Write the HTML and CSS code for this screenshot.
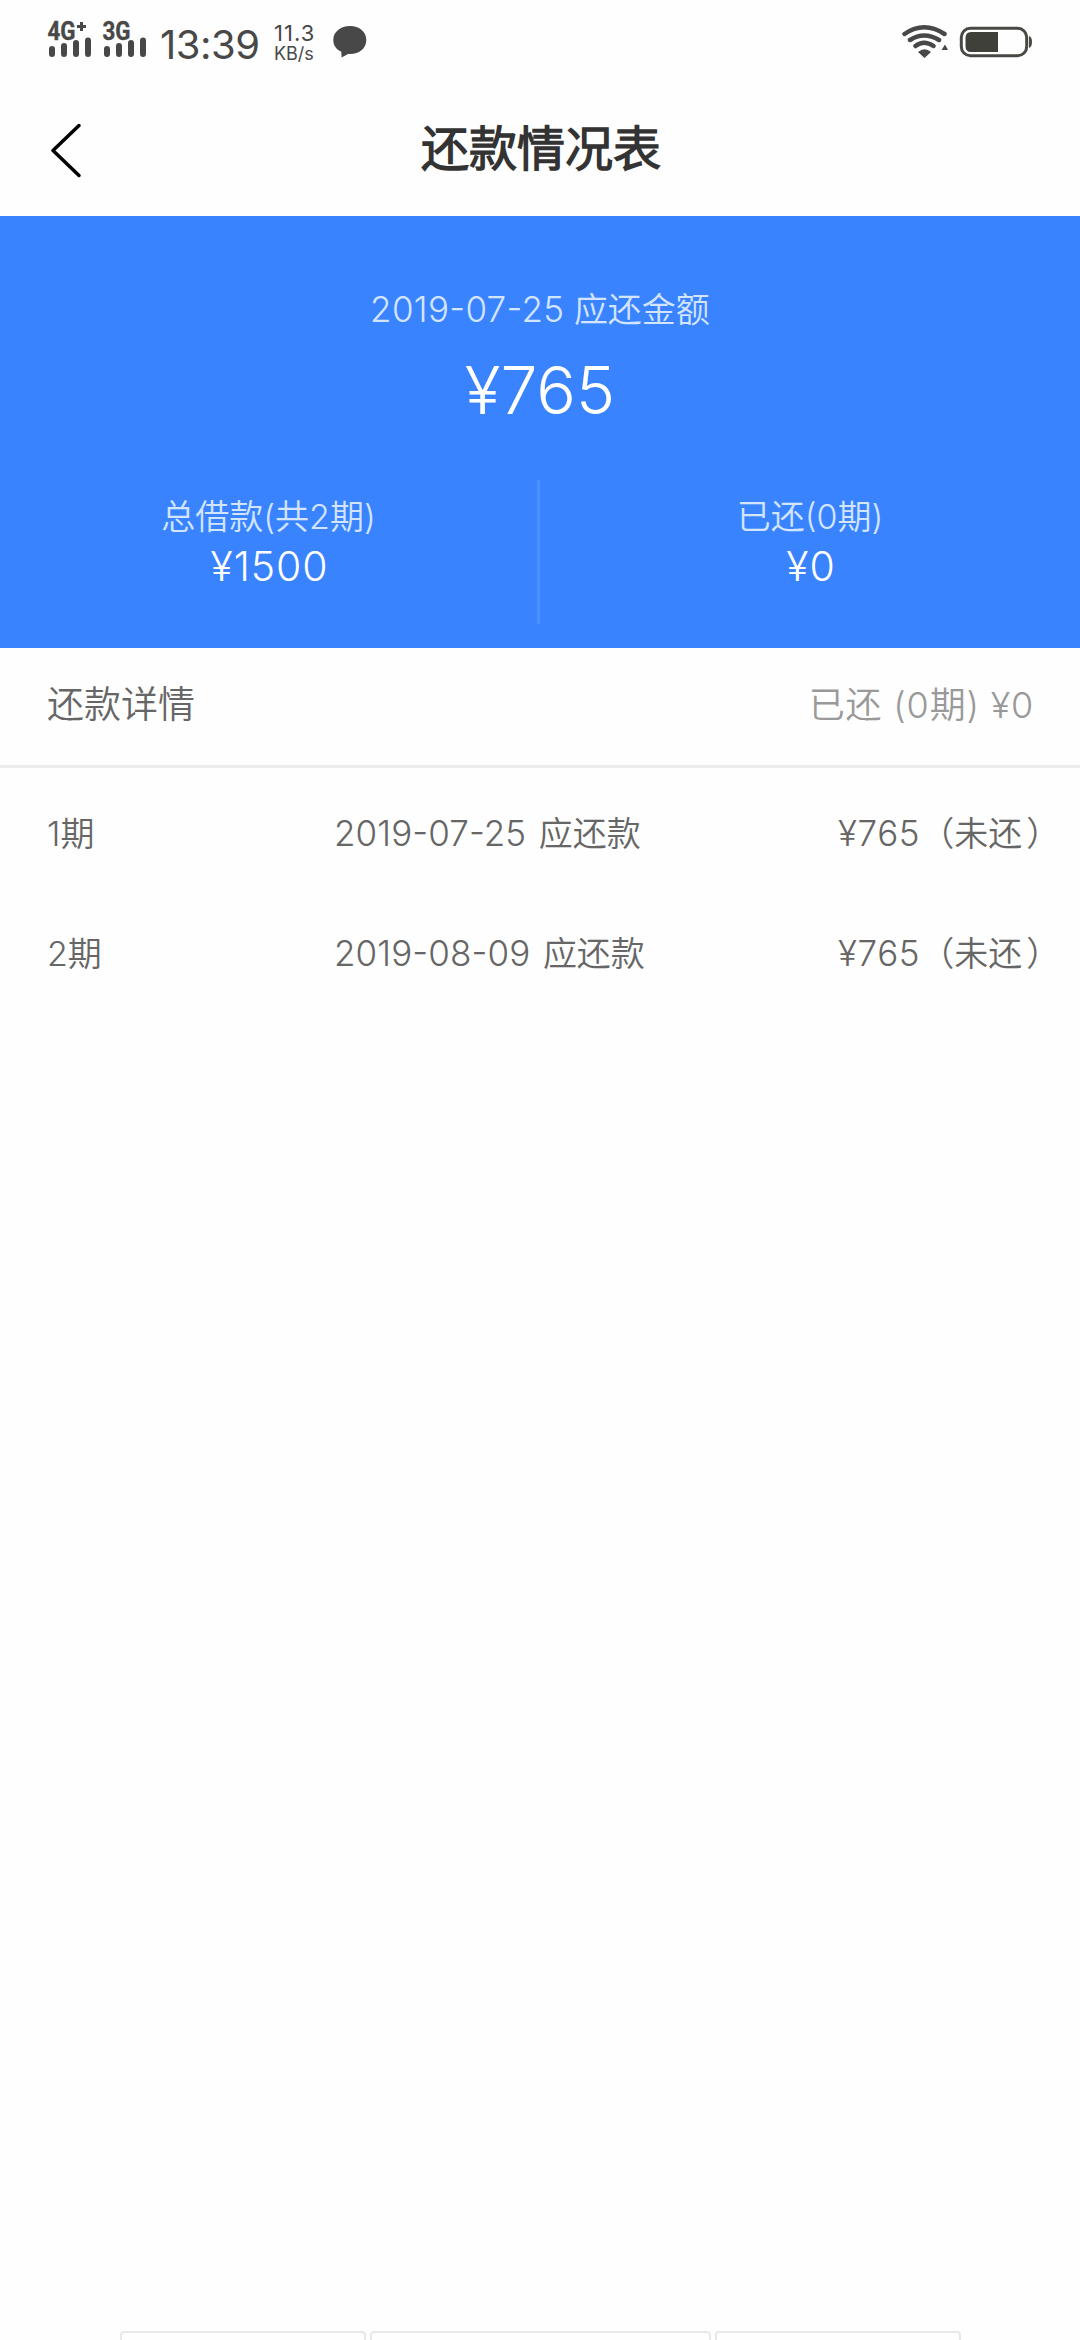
FILE: index.html
```html
<!DOCTYPE html>
<html lang="zh-CN">
<head>
<meta charset="utf-8">
<title>还款情况表</title>
<link rel="stylesheet" href="styles.css">
</head>
<body>
<div class="screen">
  <div class="status">
    <svg class="signals" width="106" height="40" viewBox="44 20 106 40">
      <g class="net"><text x="47.500" y="40" textLength="28" lengthAdjust="spacingAndGlyphs">4G</text><text x="102.500" y="40" textLength="28" lengthAdjust="spacingAndGlyphs">3G</text></g>
      <path d="M77 26.500h9M81.500 22v9" stroke="#484848" stroke-width="3"/>
      <path d="M52 49v5M64 46v8M76 43v11M88 40.500v13.500M107 49v5M119 46v8M131 43v11M143 40.500v13.500" stroke="#484848" stroke-width="6" stroke-linecap="round"/>
    </svg>
    <span class="time">13:39</span>
    <div class="speed"><span class="rate">11.3</span><span class="unit">KB/s</span></div>
    <svg class="bubble" width="34" height="34" viewBox="0 0 34 34"><path fill="#484848" d="M17 1C7.500 1 .3 6.800.3 15c0 5.400 3 9.500 8 11.800L8.600 32.500 15 29C26 29.800 33.300 23.500 33.300 15 33.300 6.800 26.500 1 17 1z"/></svg>
    <svg class="wifi" width="48" height="36" viewBox="900 24 48 36">
      <g fill="none" stroke="#484848" stroke-width="4.500" stroke-linecap="round"><path d="M904.500 34Q924 20.500 944.500 34M910 40Q924 31 939 40M915.500 46Q924 39.500 933.500 46"/></g>
      <path fill="#484848" d="M918 52Q924.500 46.500 931 52L924.500 58zM941.500 50L945 44.500 948 50z"/>
    </svg>
    <svg class="battery" width="74" height="32" viewBox="959 26 74 32">
      <rect x="961.300" y="28.300" width="65.400" height="27.400" rx="9" fill="none" stroke="#484844" stroke-width="3"/>
      <path fill="#40403b" d="M998 32v20H971q-5.500 0-5.500-6v-8q0-6 5.500-6z"/>
      <path fill="#484844" d="M1029 36q3 1 3 6t-3 6z"/>
    </svg>
  </div>
  <header class="nav">
    <svg class="back" width="36" height="60" viewBox="48 121 36 60"><path d="M79 125.500L53 150.500 79 175.500" fill="none" stroke="#000" stroke-width="3.500" stroke-linecap="round" stroke-linejoin="round"/></svg>
    <h1 class="title">还款情况表</h1>
  </header>
  <section class="summary">
    <div class="due-label"><span class="num">2019-07-25</span> 应还金额</div>
    <div class="due-amount">¥765</div>
    <div class="totals">
      <div class="total"><div class="total-label">总借款(共2期)</div><div class="total-value">¥1500</div></div>
      <div class="total"><div class="total-label">已还(0期)</div><div class="total-value">¥0</div></div>
    </div>
  </section>
  <div class="detail-head"><span class="detail-title">还款详情</span><span class="detail-paid">已还 (0期) ¥0</span></div>
  <div class="list">
    <div class="row"><span class="term">1期</span><span class="date"><span class="num">2019-07-25</span> 应还款</span><span class="amount"><span class="num">¥765</span><span class="state">（未还<span class="close">）</span></span></span></div>
    <div class="row"><span class="term">2期</span><span class="date"><span class="num">2019-08-09</span> 应还款</span><span class="amount"><span class="num">¥765</span><span class="state">（未还<span class="close">）</span></span></span></div>
  </div>
  <footer class="tabs"><div class="tab"></div><div class="tab wide"></div><div class="tab"></div></footer>
</div>
</body>
</html>
```
FILE: styles.css
```css
* { box-sizing: border-box; }
body { margin: 0; background: #fefefe; }
.screen {
  width: 1080px; height: 2340px; overflow: hidden;
  display: flex; flex-direction: column;
  background: #fefefe; color: #666;
  font-family: Inter, "Noto Sans CJK SC DemiLight", "Noto Sans CJK SC", sans-serif;
  font-weight: 350; font-size: 34px; line-height: 48px; white-space: nowrap;
}
.num { font-size: 35px; line-height: 40px; font-feature-settings: "case"; }
.status { display: flex; align-items: flex-start; height: 84px; padding: 20px 47px 0 44px; color: #484848; }
.signals { flex: none; overflow: visible; }
.net text { font: 700 25.5px Roboto, sans-serif; fill: #484848; stroke: #484848; stroke-width: 0.4px; }
.time { width: 114px; margin: 0 0 0 10px; font-size: 40px; font-weight: 400; line-height: 50px; letter-spacing: -0.5px; }
.speed { display: flex; flex-direction: column; width: 50px; font-weight: 400; }
.rate { font-size: 22px; line-height: 27px; letter-spacing: 1px; }
.unit { font-size: 18px; line-height: 14px; }
.bubble { margin: 5px 0 0 9px; }
.wifi { margin: 4px 11px 0 auto; }
.battery { margin-top: 6px; }
.nav { display: flex; align-items: center; height: 132px; padding: 0 48px 0 48px; background: #fefefe; }
.back { flex: none; margin-top: 2px; }
.title { flex: 1; margin: 0 34px 2px 0; text-align: center; color: #333; font-size: 48px; line-height: 64px; font-weight: 700; }
.summary { height: 432px; background: #3983ff; color: #fff; text-align: center; padding-top: 70px; }
.due-label, .total-label { color: #d3e4ff; }
.due-label { height: 48px; }
.due-label .num { letter-spacing: 0.3px; }
.due-amount { font-size: 66px; line-height: 80px; margin-top: 16px; }
.totals { display: flex; height: 144px; margin-top: 50px; }
.total { width: 540px; padding-top: 13px; }
.total:first-child { border-right: 3px solid #4c8fff; }
.total-value { font-size: 41px; line-height: 50px; letter-spacing: 0.9px; padding-left: 2px; }
.detail-head { display: flex; justify-content: space-between; height: 120px; padding: 33px 46px 0 47px; border-bottom: 3px solid #ececec; font-size: 37px; }
.detail-paid { color: #999; font-size: 36px; letter-spacing: 0.8px; }
.list { padding-top: 6px; }
.row { display: grid; grid-template-columns: 287px 504px 1fr; align-items: center; height: 120px; padding-left: 47px; }
.date { word-spacing: 3px; }
.date .num { letter-spacing: 0.1px; }
.amount .num { letter-spacing: 0.6px; }
.close { margin-left: 4px; }
.tabs { display: flex; gap: 4px; margin: auto 120px 0; height: 9px; }
.tab { flex: none; width: 246px; border: 2px solid #e8e8e8; border-bottom: 0; border-radius: 4px 4px 0 0; }
.wide { width: 341px; }
```
